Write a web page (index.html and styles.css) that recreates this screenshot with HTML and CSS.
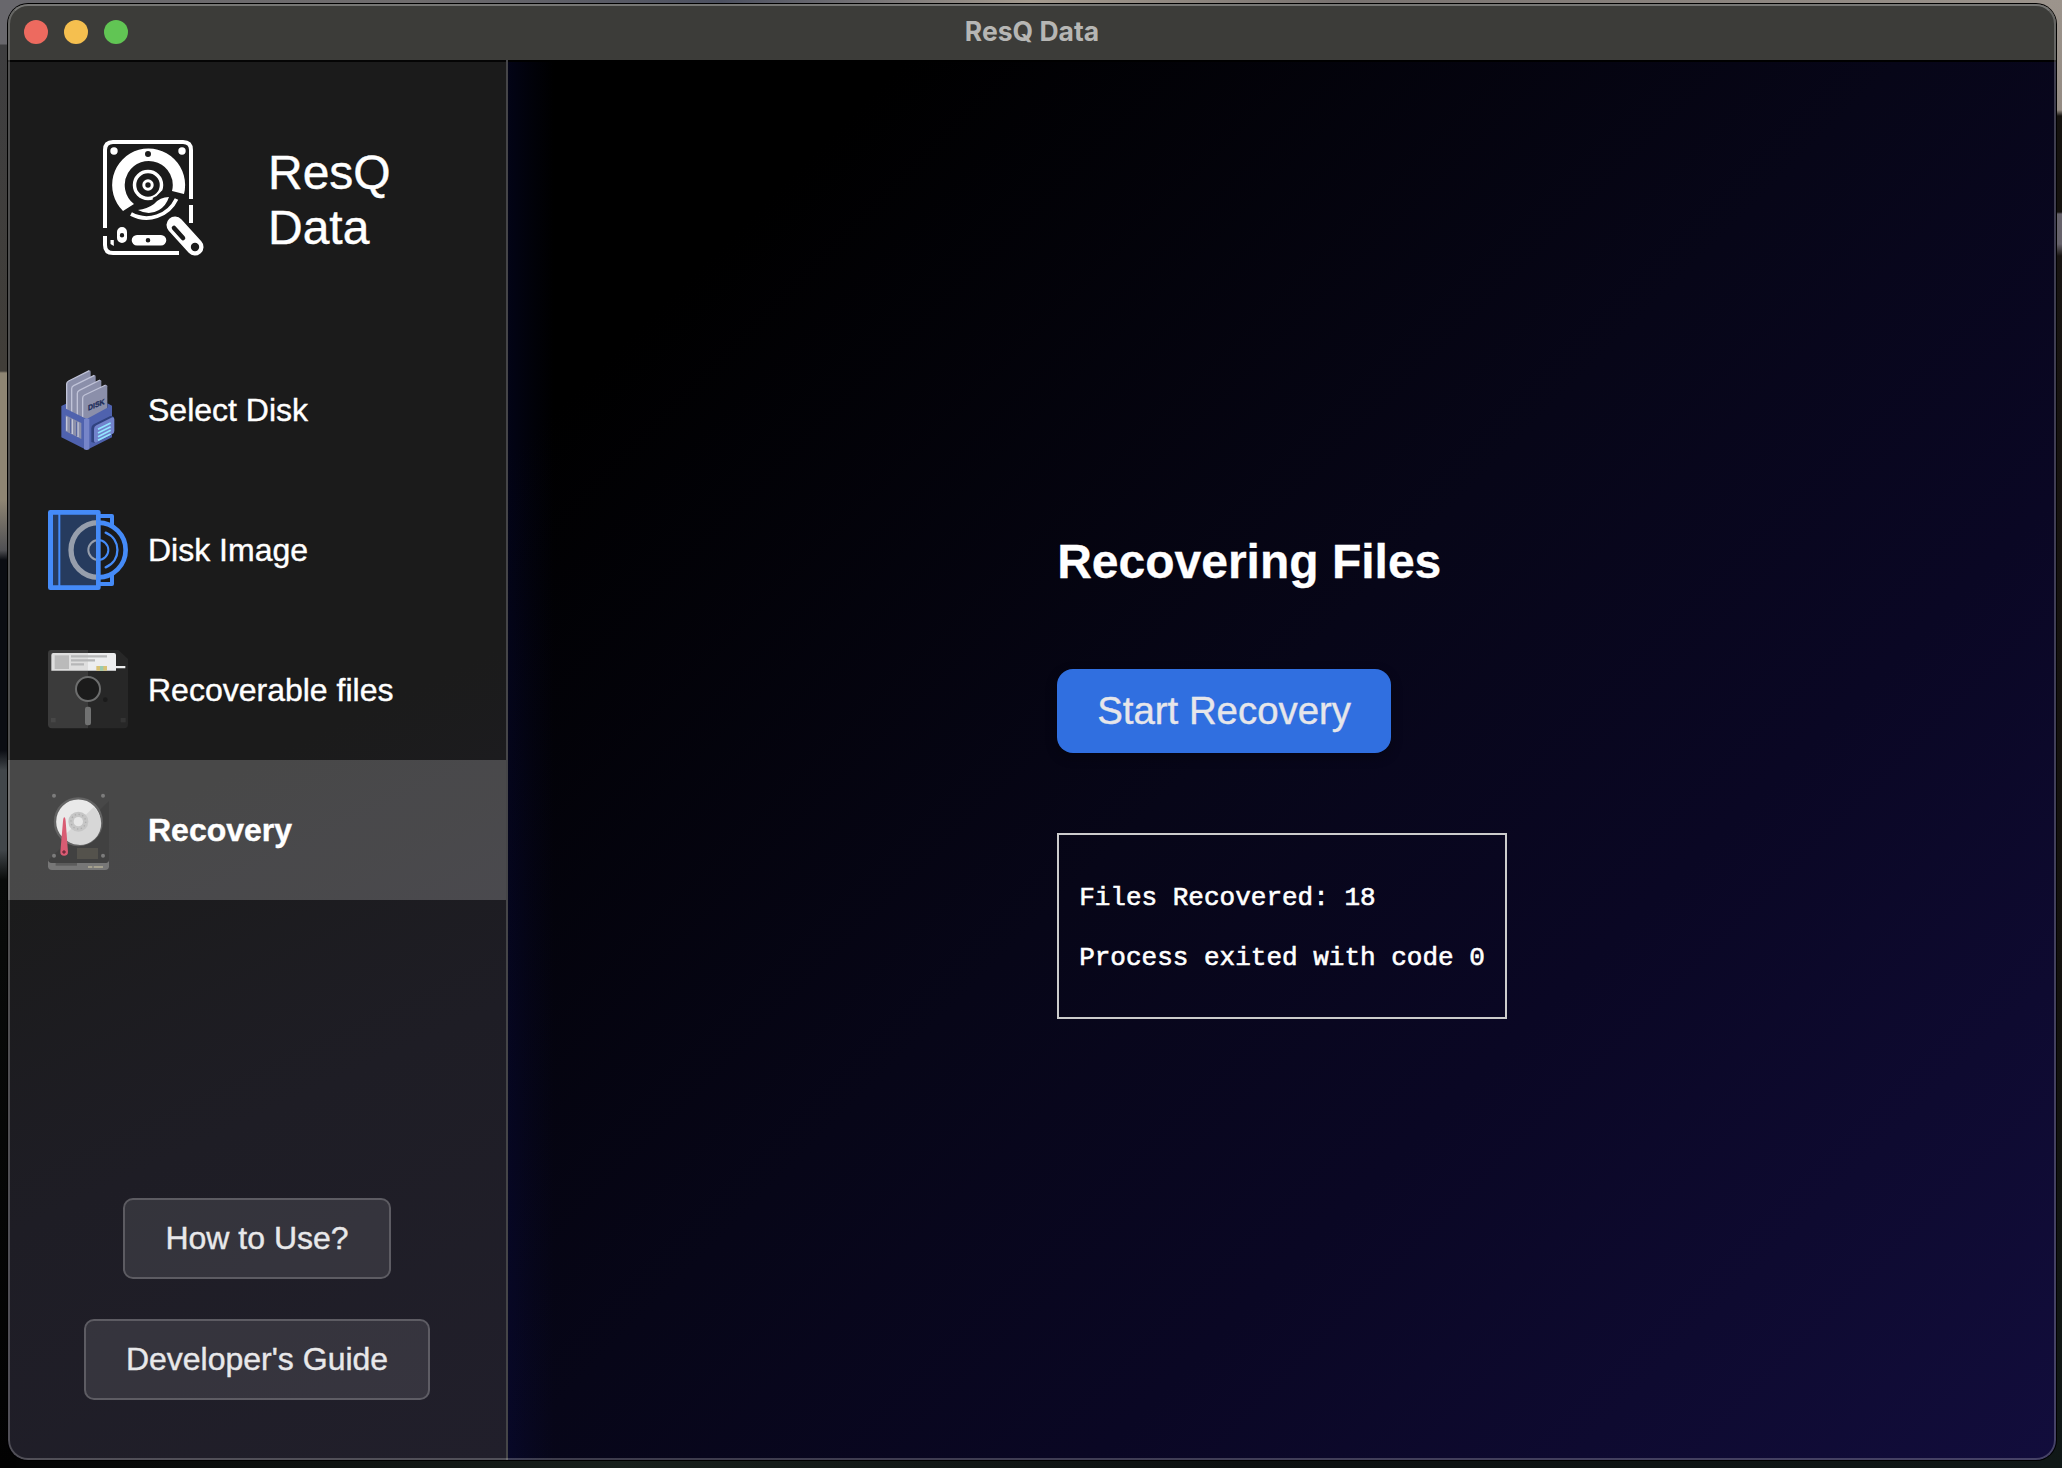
FILE: index.html
```html
<!DOCTYPE html>
<html lang="en">
<head>
<meta charset="utf-8">
<title>ResQ Data</title>
<link rel="stylesheet" href="styles.css">
</head>
<body>
<div class="window">
  <header class="titlebar">
    <div class="lights"><span class="light close"></span><span class="light minimize"></span><span class="light zoom"></span></div>
    <div class="window-title">ResQ Data</div>
  </header>
  <div class="content">
    <aside class="sidebar">
      <div class="brand">
        <svg class="brand-icon" viewBox="0 0 135 145" fill="none" stroke="#fff">
          <path d="M20 103V25q0-8 8-8h70q8 0 8 8v49M106 80v18M20 111v9q0 8 8 8h66" stroke-width="4"/>
          <g fill="#fff" stroke="none">
            <circle cx="29" cy="26" r="3.7"/><circle cx="97" cy="26" r="3.7"/>
            <path fill-rule="evenodd" d="M38 86A36.5 36.5 0 1 1 99 69L87 66A24 24 0 1 0 49 79ZM63 26a3 3 0 1 0 0 6a3 3 0 0 0 0-6Z"/>
            <path d="M53 85q9-1 16-6 6-7 15-7-3 9-10 13-10 6-21 0Z"/>
            <path fill-rule="evenodd" d="M37 102a5 5 0 0 1 5 5v6a5 5 0 0 1-10 0v-6a5 5 0 0 1 5-5Zm0 6a2.2 2.2 0 1 0 0 4.4a2.2 2.2 0 0 0 0-4.4Z"/>
            <path fill-rule="evenodd" d="M52 110h24a5.3 5.3 0 0 1 0 10.600H52a5.300 5.300 0 0 1 0-10.600Zm11 3a2.300 2.300 0 1 0 0 4.600a2.300 2.300 0 0 0 0-4.600Z"/>
            <path d="M25.500 115h3.300v6l-3.300-2Z"/>
          </g>
          <circle cx="63" cy="60" r="13.500" stroke-width="3.500"/>
          <circle cx="63" cy="60" r="4.200" stroke-width="3"/>
          <path d="M68 74l4-2 6-6" stroke="#1b1b1b" stroke-width="2"/>
          <path d="M46 89A33 33 0 0 0 91.500 74" stroke-width="3.800"/>
          <path d="M90 100l20 22" stroke-width="17" stroke-linecap="round"/>
          <path d="M89 103l9 10" stroke="#1b1b1b" stroke-width="4.600" stroke-linecap="round"/>
          <circle cx="110" cy="122" r="4.200" fill="#1b1b1b" stroke="none"/>
        </svg>
        <div class="brand-name">ResQ<br>Data</div>
      </div>
      <nav class="nav">
        <a class="nav-item">
          <svg class="nav-icon" viewBox="0 0 240 240">
            <g fill="#8b8faa">
              <path d="M56 180V42q0-6 6-9l62-31q4-1 4 4v140Z"/>
              <path class="edge" d="M56 130V42q0-6 6-9l62-31"/>
              <path d="M71 190V56q0-6 6-9l62-31q4-1 4 4v130Z"/>
              <path class="edge" d="M71 140V56q0-6 6-9l62-31"/>
              <path d="M88 200V70q0-6 6-9l62-31q4-1 4 4v130Z"/>
              <path class="edge" d="M88 150V70q0-6 6-9l62-31"/>
              <path d="M104 200V84q0-6 6-9l63-30q5-1 5 4v110Z"/>
              <path class="edge" d="M104 150V84q0-6 6-9l63-30"/>
            </g>
            <path fill="#4f62ae" d="M40 108l14-7v15l62 31 62-34v-13l14 7v95l-76 38-76-38Z"/>
            <path fill="#8b8faa" d="M53 136l47 23v48l-47-23Z"/>
            <path stroke="#c5c8da" stroke-width="4" d="M56 140v42M73 148v44M90 157v44"/>
            <path stroke="#4f5f9f" stroke-width="3" d="M68 146v44M86 155v44"/>
            <path fill="#7685c9" d="M108 148l8-4 8 4v90l-8 2-8-2Z"/>
            <path fill="#30427f" d="M130 175q0-8 7-12l50-25q11-2 11 8v38q0 7-7 10l-50 25-11-3Z"/>
            <path fill="#7283cc" d="M138 177q0-7 7-11l48-24q6-1 6 6v35q0 7-7 10l-48 25q-6 1-6-6Z"/>
            <path stroke="#91e5ff" stroke-width="5" d="M150 178l38-19m-38 30 38-19m-38 30 38-19m-38 30 38-19"/>
            <text class="disk-label" x="0" y="0" transform="translate(120 122) skewY(-22)" textLength="50" lengthAdjust="spacingAndGlyphs">DISK</text>
          </svg>
          <span>Select Disk</span>
        </a>
        <a class="nav-item">
          <svg class="nav-icon" viewBox="0 0 240 240" fill="none">
            <path fill="#263b5e" d="M7 7h144v226H7z"/>
            <path stroke="#458bf8" stroke-width="6" d="M34 12v216"/>
            <path stroke="#969eac" stroke-width="16" d="M151 38a82 82 0 0 0 0 164"/>
            <path stroke="#969eac" stroke-width="6" d="M151 90a30 30 0 0 0 0 60"/>
            <g stroke="#458bf8">
              <path stroke-width="14" d="M151 38a82 82 0 0 1 0 164"/>
              <path stroke-width="6" d="M151 90a30 30 0 0 1 0 60"/>
              <path stroke-width="7" stroke-linecap="round" d="M173 68c47 20 47 84 0 104"/>
              <path stroke-width="12" stroke-linejoin="round" d="M151 18h41v28M151 222h41v-28"/>
              <path stroke-width="14" stroke-linejoin="round" d="M7 7h144v226H7z"/>
              <path stroke-width="4" d="M13 7v226"/>
            </g>
          </svg>
          <span>Disk Image</span>
        </a>
        <a class="nav-item">
          <svg class="nav-icon" viewBox="0 0 240 240">
            <path fill="#3b3b3b" d="M10 0h110v235H12q-12 0-12-12V10Q0 0 10 0Z"/>
            <path fill="#272727" d="M120 0h91l29 27v195q0 13-12 13H120Z"/>
            <path fill="#dedede" d="M16 9h104v53H10V15q0-6 6-6Z"/>
            <path fill="#edeeef" d="M120 9h78q6 0 6 6v33h28v7h-28v7h-84Z"/>
            <path fill="#bababa" d="M20 16h43v41H20z"/>
            <path stroke="#b6b7b8" stroke-width="7" d="M69 19h108M69 31h72M69 43h39"/>
            <path fill="#d8c275" d="M145 48h32v14h-32z"/><path fill="#9accb2" d="M156 48h10v14h-10z"/>
            <circle cx="120" cy="117" r="36" fill="#1b1b1b" stroke="#6d6e6e" stroke-width="6"/>
            <rect x="111" y="170" width="18" height="56" rx="7" fill="#717272"/>
            <circle cx="172" cy="149" r="7" fill="#1b1b1b"/>
            <path fill="#474747" d="M9 204h14v13H9z"/><path fill="#343434" d="M218 204h15v13h-15z"/>
          </svg>
          <span>Recoverable files</span>
        </a>
        <a class="nav-item active">
          <svg class="nav-icon" viewBox="0 0 240 240">
            <path fill="#777" d="M0 202h183v27q0 11-12 11H12q-12 0-12-11Z"/>
            <path fill="#484848" d="M12 0h159q12 0 12 12v194q0 13-12 13H12q-12 0-12-13V12Q0 0 12 0Z"/>
            <path fill="#414141" d="M183 33v173q0 13-12 13H12q-8 0-11-8Z"/>
            <circle cx="91" cy="95" r="70" fill="#e9e9e9" stroke="#646464" stroke-width="7"/>
            <path fill="#d7d7d7" d="M137 52A64 64 0 1 1 45 140Z"/>
            <circle cx="91" cy="95" r="30" fill="#c6c6c6"/>
            <circle cx="91" cy="95" r="22" fill="none" stroke="#adadad" stroke-width="4" stroke-dasharray="4 7.500"/>
            <circle cx="91" cy="95" r="14" fill="#e7e7e7"/>
            <g fill="#7c7c7c"><circle cx="18" cy="17" r="6"/><circle cx="165" cy="17" r="6"/><circle cx="18" cy="197" r="6"/><circle cx="165" cy="197" r="6"/></g>
            <path fill="#54524c" d="M87 174h63v33H87z"/>
            <path fill="#d95c73" d="M49 82q3 0 4 12l7 92a11.500 11.500 0 1 1-23 0l8-92q1-12 4-12Z"/>
            <circle cx="48" cy="186" r="4" fill="#44303a" stroke="#942d44" stroke-width="3"/>
            <path fill="#5c5c5c" d="M23 219h64v8H23z"/><path fill="#a4a08e" d="M120 228h13v6h-13zm17 0h28v6h-28z"/>
          </svg>
          <span>Recovery</span>
        </a>
      </nav>
      <div class="help">
        <button class="help-button">How to Use?</button>
        <button class="help-button">Developer's Guide</button>
      </div>
    </aside>
    <main class="main">
      <section class="recovery">
        <h1>Recovering Files</h1>
        <button class="start">Start Recovery</button>
        <pre class="log">Files Recovered: 18

Process exited with code 0</pre>
      </section>
    </main>
  </div>
</div>
</body>
</html>
```
FILE: styles.css
```css
* { box-sizing: border-box; }

body {
  margin: 0;
  width: 2062px;
  height: 1468px;
  padding: 4px 6px 8px 8px;
  overflow: hidden;
  font-family: "Liberation Sans", Arial, sans-serif;
  color: #fff;
  background:
    linear-gradient(#9c948c 0, #948b83 110px, #15120f 116px, #15120f 212px, #65616a 214px, #65616a 244px, #181412 256px, #13110e 1000px, #101817 1468px) right 0 top 0 / 14px 100% no-repeat,
    linear-gradient(#68676c 0, #68676c 44px, #3e3e40 45px, #403d38 371px, #8e8573 373px, #8e8573 500px, #505054 550px, #0b0d13 560px, #0b0d13 750px, #41464a 770px, #41464a 850px, #090b0a 880px, #020202 100%) left 0 top 0 / 16px 100% no-repeat,
    linear-gradient(90deg, #68676c, #6f6c6d 20%, #4c5060 35%, #a49a8e 50%, #77716f 65%, #9c948c) top / 100% 14px no-repeat,
    linear-gradient(90deg, #020202, #18201c 30%, #0c1010 60%, #101817);
}

.window {
  position: relative;
  display: flex;
  flex-direction: column;
  height: 1456px;
  border-radius: 20px;
  overflow: hidden;
  box-shadow: 0 0 0 1px #000;
}

/* Hairline highlight around the window frame */
.window::after {
  content: "";
  position: absolute;
  inset: 0;
  border: 2px solid rgba(255, 255, 255, .22);
  border-top-color: rgba(255, 255, 255, .3);
  border-radius: 20px;
  pointer-events: none;
}

.titlebar {
  display: grid;
  grid-template-columns: 1fr auto 1fr;
  align-items: center;
  flex: none;
  height: 56px;
  padding: 0 16px;
  background: #3c3c39;
}
.lights { display: flex; gap: 16px; }
.light { width: 24px; height: 24px; border-radius: 50%; }
.close { background: #ed6a5f; }
.minimize { background: #f5bf4f; }
.zoom { background: #61c554; }
.window-title {
  padding-bottom: 2px;
  font: 700 26.500px/32px Inter, sans-serif;
  color: #b6b6b4;
}

.content {
  display: flex;
  flex: 1;
  min-height: 0;
  background: linear-gradient(135deg, #000 0%, #000 26%, #070618 55%, #0a0724 72%, #120d3c 100%);
}

.sidebar {
  display: flex;
  flex-direction: column;
  flex: none;
  width: 500px;
  border-right: 2px solid #454548;
  box-shadow: inset 0 2px #050505;
  background: linear-gradient(155deg, #1b1b1b 0%, #1b1b1b 50%, #1e1d25 72%, #211f2b 100%);
  -webkit-text-stroke: .4px;
}
.brand {
  display: flex;
  align-items: center;
  height: 280px;
  padding-left: 77px;
  gap: 48px;
}
.brand-icon { width: 135px; height: 145px; margin-top: -5px; }
.brand-name { font-size: 48px; line-height: 55px; }

.nav-item {
  display: flex;
  align-items: center;
  gap: 20px;
  height: 140px;
  padding: 0 40px;
  font-size: 32px;
}
.nav-icon { width: 80px; height: 80px; }
.edge { fill: none; stroke: #c0c3d8; stroke-width: 4; }
.disk-label { font: 700 23px "Liberation Sans", sans-serif; fill: #1d2c5a; stroke: #1d2c5a; }
.active { font-weight: 700; background: rgba(255, 255, 255, .2); }

.help {
  display: flex;
  flex-direction: column;
  align-items: center;
  gap: 40px;
  margin-top: auto;
  padding-bottom: 60px;
}
button { font-family: inherit; -webkit-text-stroke: .4px; }
.help-button {
  height: 81px;
  padding: 0 40px;
  border: 2px solid rgba(255, 255, 255, .2);
  border-radius: 10px;
  background: rgba(255, 255, 255, .1);
  font-size: 32px;
  color: #e8e8ea;
}

.main {
  flex: 1;
  display: flex;
  align-items: center;
  justify-content: center;
  padding-top: 32px;
  box-shadow: inset 0 2px #000;
  background: linear-gradient(90deg, rgba(10, 14, 84, .26), rgba(10, 14, 84, .12) 22px, transparent 46px);
}
.recovery {
  display: flex;
  flex-direction: column;
  align-items: flex-start;
}
h1 { margin: 0 0 80px; font-size: 48px; line-height: 55px; -webkit-text-stroke: .3px; }
.start {
  height: 84px;
  padding: 0 40px;
  border: 0;
  border-radius: 16px;
  background: #306fe0;
  box-shadow: 0 4px 12px rgba(0, 0, 0, .3);
  font-size: 38.400px;
  color: #e6e6ea;
}
.log {
  margin: 80px 0 0;
  padding: 48px 20px 44px;
  border: 2px solid #ccc;
  font: 26px/30px "Courier New", "Liberation Mono", monospace;
  -webkit-text-stroke: .6px;
}
```
